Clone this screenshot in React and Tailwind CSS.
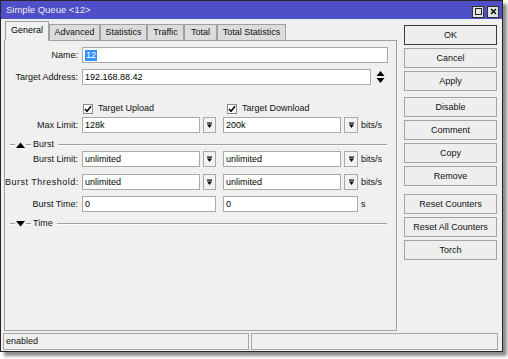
// Simple Queue dialog
import React from 'react'

function DropBtn({ w = 'w-[13px]' }) {
  return (
    <div className={`${w} h-[16px] ml-[3px] bg-[#f2f2f2] border border-[#a9a9a9] flex items-center justify-center`}>
      <svg width="7" height="7" viewBox="0 0 7 7">
        <rect x="1" y="0.5" width="5" height="1.2" fill="#000" />
        <polygon points="1,2.5 6,2.5 3.5,6" fill="#000" />
      </svg>
    </div>
  )
}

function Field({ w, children }) {
  return (
    <div className={`${w} h-[16px] bg-white border border-[#a9a9a9] flex items-center px-[2px] text-black`}>
      {children}
    </div>
  )
}

function Label({ children, className = '' }) {
  return <div className={`w-[77px] pr-[4px] text-right text-[#111] whitespace-nowrap ${className}`}>{children}</div>
}

function DualRow({ label, a, b, unit, drop = true, wide }) {
  return (
    <div className="flex items-center h-[16px]">
      <Label className={wide ? 'tracking-[0.5px]' : ''}>{label}</Label>
      <div className="w-[134px] flex">
        {drop ? (
          <>
            <Field w="w-[118px]">{a}</Field>
            <DropBtn />
          </>
        ) : (
          <Field w="w-[134px]">{a}</Field>
        )}
      </div>
      <div className="w-[135px] flex ml-[7px]">
        {drop ? (
          <>
            <Field w="w-[118px]">{b}</Field>
            <DropBtn w="w-[14px]" />
          </>
        ) : (
          <Field w="w-[135px]">{b}</Field>
        )}
      </div>
      <span className="ml-[3px] text-[#111]">{unit}</span>
    </div>
  )
}

function Section({ title, open }) {
  return (
    <div className="flex items-center h-[11px]">
      <div className="ml-[5px] w-[5px] h-[2px] border-t border-[#a0a0a0] border-b border-b-white" />
      <svg width="11" height="6" viewBox="0 0 11 6">
        {open ? <polygon points="1,6 10,6 5.5,0.5" fill="#000" /> : <polygon points="1,0 10,0 5.5,5.5" fill="#000" />}
      </svg>
      <div className="w-[5px] h-[2px] border-t border-[#a0a0a0] border-b border-b-white" />
      <span className="ml-[2px] text-[#111]">{title}</span>
      <div className="flex-1 ml-[4px] mr-[9px] h-[2px] border-t border-[#a0a0a0] border-b border-b-white" />
    </div>
  )
}

function Check({ label, className = '' }) {
  return (
    <div className={`flex items-center ${className}`}>
      <div className="w-[10px] h-[10px] bg-white border border-[#8a8a8a] flex items-center justify-center">
        <svg width="8" height="8" viewBox="0 0 8 8">
          <polyline points="1,4 3,6.2 7,1.2" fill="none" stroke="#000" strokeWidth="1.6" />
        </svg>
      </div>
      <span className="ml-[5px] text-[#111]">{label}</span>
    </div>
  )
}

function Btn({ children, main, className = '' }) {
  return (
    <div
      className={`h-[20px] flex items-center justify-center bg-[#eeeeee] text-[#111] border ${
        main ? 'border-[#3a3a3a]' : 'border-[#a3a3a3]'
      } ${className}`}
    >
      {children}
    </div>
  )
}

const TABS = [
  { label: 'General', w: 'w-[44px]' },
  { label: 'Advanced', w: 'w-[51px]' },
  { label: 'Statistics', w: 'w-[47px]' },
  { label: 'Traffic', w: 'w-[37px]' },
  { label: 'Total', w: 'w-[33px]' },
  { label: 'Total Statistics', w: 'w-[69px]' },
]

export default function App() {
  return (
    <div className="w-[508px] h-[359px] bg-white font-['Liberation_Sans',Arial,sans-serif] text-[9px] leading-none">
      <div className="w-[503px] h-[352px] bg-[#f0f0f0] border border-[#262626] shadow-[4px_4px_3px_rgba(0,0,0,0.45)] flex flex-col">
        {/* title bar */}
        <div className="h-[18px] bg-[#4f4fc8] flex items-center justify-between pl-[5px] pr-[3px]">
          <span className="text-[#ececec] text-[9.5px]">Simple Queue &lt;12&gt;</span>
          <div className="flex gap-[3px] mt-[3px]">
            <div className="w-[12px] h-[12px] bg-[#e4e4e4] border border-[#333] flex items-center justify-center">
              <div className="w-[7px] h-[7px] border border-[#222]" />
            </div>
            <div className="w-[12px] h-[12px] bg-[#e4e4e4] border border-[#333] flex items-center justify-center">
              <svg width="7" height="7" viewBox="0 0 7 7">
                <path d="M1 1 L6 6 M6 1 L1 6" stroke="#111" strokeWidth="1.6" />
              </svg>
            </div>
          </div>
        </div>

        {/* body */}
        <div className="flex-1 flex">
          <div className="w-[396px] pl-[3px] flex flex-col">
            <div className="h-[22px] flex items-end pl-[1px] relative z-10 -mb-px">
              {TABS.map((t, i) => (
                <div
                  key={t.label}
                  className={`${t.w} flex items-center justify-center border border-[#a0a0a0] ${
                    i === 0
                      ? 'h-[20px] bg-[#f0f0f0] border-b-[#f0f0f0] text-black pb-[2px]'
                      : 'h-[17px] bg-[#dcdcdc] text-[#111]'
                  }`}
                >
                  {t.label}
                </div>
              ))}
            </div>
            <div className="flex-1 border border-[#a0a0a0] bg-[#f0f0f0] pt-[6px] flex flex-col">
              <div className="flex items-center h-[16px]">
                <Label>Name:</Label>
                <Field w="w-[306px]">
                  <span className="bg-[#3390ff] text-white px-[1px] h-[11px] flex items-center">12</span>
                </Field>
              </div>
              <div className="flex items-center h-[16px] mt-[6px]">
                <Label>Target Address:</Label>
                <Field w="w-[289px]">192.168.88.42</Field>
                <svg className="ml-[5px]" width="9" height="14" viewBox="0 0 9 14">
                  <polygon points="0.5,6 8.5,6 4.5,1" fill="#000" />
                  <polygon points="0.5,8 8.5,8 4.5,13" fill="#000" />
                </svg>
              </div>
              <div className="flex items-center h-[13px] mt-[17px] pl-[78px]">
                <Check label="Target Upload" className="w-[141px]" />
                <Check label="Target Download" className="ml-[3px]" />
              </div>
              <div className="mt-[2px]">
                <DualRow label="Max Limit:" a="128k" b="200k" unit="bits/s" />
              </div>
              <div className="mt-[6px]">
                <Section title="Burst" open />
              </div>
              <div className="mt-[1px]">
                <DualRow label="Burst Limit:" a="unlimited" b="unlimited" unit="bits/s" />
              </div>
              <div className="mt-[7px]">
                <DualRow label="Burst Threshold:" a="unlimited" b="unlimited" unit="bits/s" wide />
              </div>
              <div className="mt-[6px]">
                <DualRow label="Burst Time:" a="0" b="0" unit="s" drop={false} />
              </div>
              <div className="mt-[6px]">
                <Section title="Time" />
              </div>
            </div>
          </div>

          <div className="w-[93px] ml-[7px] pt-[6px] flex flex-col">
            <Btn main>OK</Btn>
            <Btn className="mt-[3px]">Cancel</Btn>
            <Btn className="mt-[3px]">Apply</Btn>
            <Btn className="mt-[6px]">Disable</Btn>
            <Btn className="mt-[3px]">Comment</Btn>
            <Btn className="mt-[3px]">Copy</Btn>
            <Btn className="mt-[3px]">Remove</Btn>
            <Btn className="mt-[8px]">Reset Counters</Btn>
            <Btn className="mt-[3px]">Reset All Counters</Btn>
            <Btn className="mt-[3px]">Torch</Btn>
          </div>
        </div>

        {/* status bar */}
        <div className="h-[20px] pt-[2px] pl-[2px] flex">
          <div className="w-[246px] h-[17px] border border-[#a6a6a6] flex items-center pl-[2px] text-[#111]">enabled</div>
          <div className="w-[247px] h-[17px] ml-[2px] border border-[#a6a6a6]" />
        </div>
      </div>
    </div>
  )
}
